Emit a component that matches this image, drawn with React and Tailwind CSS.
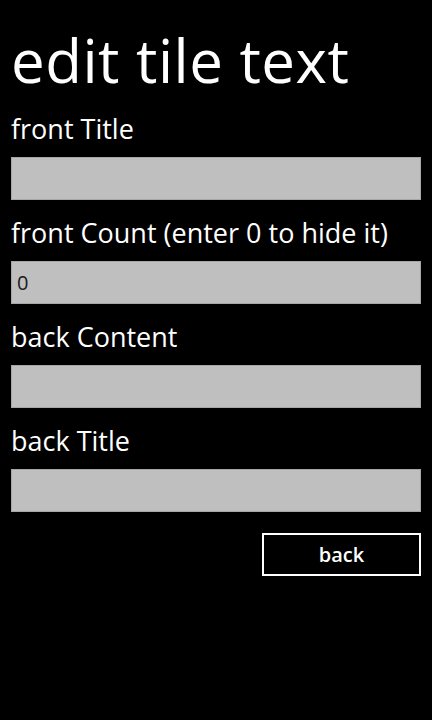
export default function App() {
  const fields = [
    { label: "front Title", value: "" },
    { label: "front Count (enter 0 to hide it)", value: "0" },
    { label: "back Content", value: "" },
    { label: "back Title", value: "" },
  ];

  return (
    <div
      className="w-[432px] h-[720px] bg-black text-white px-[11px] pt-[30px]"
      style={{ fontFamily: '"Open Sans", "Noto Sans", sans-serif' }}
    >
      <h1 className="text-[60px] leading-[60px] font-normal tracking-[0.5px]">edit tile text</h1>

      <div className="mt-[23px] flex flex-col gap-[17px]">
        {fields.map((f) => (
          <div key={f.label} className="flex flex-col gap-[12px]">
            <label className="text-[27px] leading-[32px]">{f.label}</label>
            <input
              type="text"
              defaultValue={f.value}
              className="h-[43px] w-full bg-[#bfbfbf] border border-[#a6a6a6] px-[5px] text-[20px] text-[#1a1a1a] outline-none"
            />
          </div>
        ))}
      </div>

      <div className="flex justify-end mt-[21px]">
        <button className="w-[159px] h-[43px] border-2 border-white text-[20px] font-semibold leading-none">
          back
        </button>
      </div>
    </div>
  );
}
